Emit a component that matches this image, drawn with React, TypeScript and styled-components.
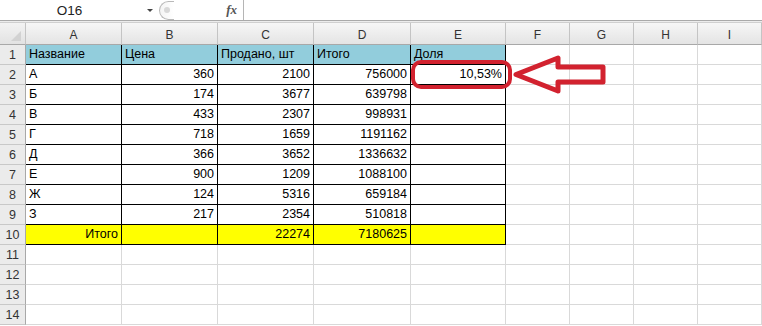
import React from "react";
import styled, { createGlobalStyle } from "styled-components";

const GlobalStyle = createGlobalStyle`
  html, body {
    margin: 0;
    padding: 0;
    background: #ffffff;
  }
  body {
    font-family: "Liberation Sans", Arial, sans-serif;
  }
`;

const COLUMNS = ["A", "B", "C", "D", "E", "F", "G", "H", "I"];
const WIDTHS = [26, 96, 96, 96, 97, 95, 64, 64, 64, 64];

type Row = {
  name: string;
  price: string;
  sold: string;
  total: string;
  share: string;
};

const DATA: Row[] = [
  { name: "А", price: "360", sold: "2100", total: "756000", share: "10,53%" },
  { name: "Б", price: "174", sold: "3677", total: "639798", share: "" },
  { name: "В", price: "433", sold: "2307", total: "998931", share: "" },
  { name: "Г", price: "718", sold: "1659", total: "1191162", share: "" },
  { name: "Д", price: "366", sold: "3652", total: "1336632", share: "" },
  { name: "Е", price: "900", sold: "1209", total: "1088100", share: "" },
  { name: "Ж", price: "124", sold: "5316", total: "659184", share: "" },
  { name: "З", price: "217", sold: "2354", total: "510818", share: "" },
];

const App = () => {
  const rows: { cells: string[]; align: ("left" | "right")[]; fill?: string }[] = [
    {
      cells: ["Название", "Цена", "Продано, шт", "Итого", "Доля"],
      align: ["left", "left", "left", "left", "left"],
      fill: "#92cddc",
    },
    ...DATA.map((r) => ({
      cells: [r.name, r.price, r.sold, r.total, r.share],
      align: ["left", "right", "right", "right", "right"] as ("left" | "right")[],
    })),
    {
      cells: ["Итого", "", "22274", "7180625", ""],
      align: ["right", "right", "right", "right", "right"],
      fill: "#ffff00",
    },
  ];

  return (
    <Page>
      <GlobalStyle />
      <FormulaBar>
        <NameBox>
          <NameText>O16</NameText>
          <DropArrow />
        </NameBox>
        <Splitter />
        <FxButton>fx</FxButton>
        <FormulaInput />
      </FormulaBar>
      <BarDivider />
      <Sheet>
        <Corner>
          <CornerMark />
        </Corner>
        {COLUMNS.map((c) => (
          <ColHeader key={c}>{c}</ColHeader>
        ))}
        {Array.from({ length: 14 }, (_, i) => {
          const row = rows[i];
          return (
            <React.Fragment key={i}>
              <RowHeader>{i + 1}</RowHeader>
              {COLUMNS.map((c, ci) => {
                const inTable = !!row && ci < 5;
                return (
                  <Cell
                    key={c}
                    $bordered={inTable}
                    $fill={inTable ? row.fill : undefined}
                    $align={inTable ? row.align[ci] : "left"}
                  >
                    {inTable ? row.cells[ci] : ""}
                  </Cell>
                );
              })}
            </React.Fragment>
          );
        })}
      </Sheet>
      <Callout width={762} height={326} viewBox="0 0 762 326">
        <rect
          x="413"
          y="62"
          width="97"
          height="25"
          rx="8"
          fill="none"
          stroke="#d2222f"
          strokeWidth="4"
        />
        <polygon
          points="516,74.5 558,58 558,67 603,67 603,82 558,82 558,91"
          fill="none"
          stroke="#d2222f"
          strokeWidth="5"
          strokeLinejoin="round"
        />
      </Callout>
    </Page>
  );
};

export default App;

const Page = styled.div`
  position: relative;
  width: 762px;
  height: 326px;
  overflow: hidden;
  background: #ffffff;
`;

const FormulaBar = styled.div`
  display: flex;
  align-items: center;
  height: 20px;
  background: #ffffff;
`;

const NameBox = styled.div`
  display: flex;
  align-items: center;
  width: 159px;
  height: 20px;
  padding-right: 6px;
  box-sizing: border-box;
`;

const NameText = styled.span`
  flex: 1;
  text-align: center;
  padding-right: 8px;
  font-size: 13.5px;
  color: #222;
`;

const DropArrow = styled.span`
  width: 0;
  height: 0;
  border-left: 3px solid transparent;
  border-right: 3px solid transparent;
  border-top: 3px solid #444;
  margin-top: 1px;
`;

const Splitter = styled.div`
  width: 15px;
  height: 19px;
  margin-top: 1px;
  box-sizing: border-box;
  border: 1px solid #b9b9b9;
  border-right: none;
  border-radius: 10px 0 0 10px;
  background: linear-gradient(90deg, #f4f4f4, #ffffff);
  position: relative;

  &::after {
    content: "";
    position: absolute;
    left: 4px;
    top: 5px;
    width: 6px;
    height: 6px;
    border-radius: 50%;
    background: #d8d8d8;
  }
`;

const FxButton = styled.div`
  width: 69px;
  text-align: right;
  padding-right: 6px;
  box-sizing: border-box;
  font-family: "Liberation Serif", "Times New Roman", serif;
  font-style: italic;
  font-weight: bold;
  font-size: 13px;
  color: #555;
`;

const FormulaInput = styled.div`
  flex: 1;
  height: 20px;
  border-left: 1px solid #b5b5b5;
  background: #ffffff;
`;

const BarDivider = styled.div`
  height: 1px;
  border-top: 1px solid #a9a9a9;
  border-bottom: 1px solid #cfcfcf;
  background: #ececec;
`;

const Sheet = styled.div`
  display: grid;
  grid-template-columns: ${WIDTHS.map((w) => `${w}px`).join(" ")};
  grid-template-rows: 22px;
  grid-auto-rows: 20px;
  font-size: 12.5px;
  color: #000;
`;

const Corner = styled.div`
  position: relative;
  box-sizing: border-box;
  background: linear-gradient(#f3f3f3, #e2e2e2);
  border-right: 1px solid #c4c4c4;
  border-bottom: 1px solid #a8a8a8;
`;

const CornerMark = styled.span`
  position: absolute;
  right: 4px;
  bottom: 3px;
  width: 0;
  height: 0;
  border-left: 10px solid transparent;
  border-bottom: 10px solid #d2d2d2;
`;

const ColHeader = styled.div`
  display: flex;
  align-items: center;
  justify-content: center;
  box-sizing: border-box;
  padding-top: 2px;
  background: linear-gradient(#f6f6f6, #e4e4e4);
  border-right: 1px solid #c4c4c4;
  border-bottom: 1px solid #a8a8a8;
  font-size: 12px;
  color: #333;
`;

const RowHeader = styled.div`
  display: flex;
  align-items: center;
  justify-content: center;
  box-sizing: border-box;
  background: #ebebeb;
  border-right: 1px solid #a8a8a8;
  border-bottom: 1px solid #c8c8c8;
  font-size: 12.5px;
  color: #333;
`;

const Cell = styled.div<{ $bordered: boolean; $fill?: string; $align: "left" | "right" }>`
  box-sizing: border-box;
  line-height: 19px;
  padding: 0 3px 0 3px;
  white-space: nowrap;
  overflow: hidden;
  text-align: ${(p) => p.$align};
  background: ${(p) => p.$fill ?? "#ffffff"};
  border-right: 1px solid ${(p) => (p.$bordered ? "#000" : "#d9d9d9")};
  border-bottom: 1px solid ${(p) => (p.$bordered ? "#000" : "#d9d9d9")};
`;

const Callout = styled.svg`
  position: absolute;
  left: 0;
  top: 0;
  pointer-events: none;
`;
